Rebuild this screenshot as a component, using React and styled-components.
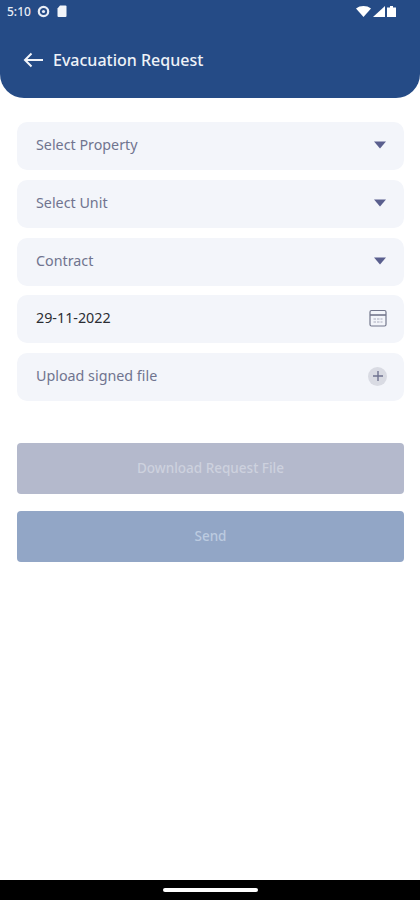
import styled, { createGlobalStyle } from "styled-components";

const GlobalStyle = createGlobalStyle`
  html, body {
    margin: 0;
    padding: 0;
    background: #fff;
  }
  * {
    box-sizing: border-box;
  }
`;

const ChevronDown = () => (
  <ChevronSvg width="12" height="8" viewBox="0 0 12 8">
    <path d="M0 0.5h12L6 7.5z" fill="#5a5f8e" />
  </ChevronSvg>
);

const CalendarIcon = () => (
  <svg width="18" height="18" viewBox="0 0 18 18" fill="none" stroke="#73778c" strokeWidth="1.2">
    <rect x="1" y="1.5" width="16" height="15.5" rx="1.5" />
    <path d="M1 6h16" strokeWidth="1.6" />
    <path d="M4.5 10h2.5M8 10h2.5M11.5 10h2M4.5 13h2.5M8 13h2.5M11.5 13h2" stroke="#a9acbc" />
  </svg>
);

const PlusIcon = () => (
  <PlusCircle>
    <svg width="10" height="10" viewBox="0 0 10 10" fill="none" stroke="#6f7390" strokeWidth="1.4">
      <path d="M5 0v10M0 5h10" />
    </svg>
  </PlusCircle>
);

const fields = [
  { label: "Select Property", icon: <ChevronDown /> },
  { label: "Select Unit", icon: <ChevronDown /> },
  { label: "Contract", icon: <ChevronDown /> },
  { label: "29-11-2022", icon: <CalendarIcon />, filled: true },
  { label: "Upload signed file", icon: <PlusIcon /> },
];

export default function App() {
  return (
    <Screen>
      <GlobalStyle />
      <Header>
        <StatusBar>
          <LeftStatus>
            <Time>5:10</Time>
            <svg width="13" height="13" viewBox="0 0 13 13">
              <circle cx="6.5" cy="6.5" r="4.7" fill="none" stroke="#e8edf5" strokeWidth="2.2" />
              <circle cx="6.5" cy="6.5" r="1.6" fill="#e8edf5" />
            </svg>
            <CardIcon width="10" height="12" viewBox="0 0 10 12">
              <path d="M3 0.5h5.5a1 1 0 0 1 1 1v9.5a1 1 0 0 1-1 1h-7a1 1 0 0 1-1-1V3.5z" fill="#f2f5fa" />
            </CardIcon>
          </LeftStatus>
          <RightStatus>
            <svg width="15" height="11" viewBox="0 0 15 11">
              <path d="M0 2.5C4.2-0.8 10.8-0.8 15 2.5L7.5 11z" fill="#fff" />
            </svg>
            <svg width="12" height="11" viewBox="0 0 12 11">
              <path d="M12 0v11H0z" fill="#fff" />
            </svg>
            <svg width="9" height="11" viewBox="0 0 9 11">
              <path d="M3 0h3v1.5h3V11H0V1.5h3z" fill="#fff" />
            </svg>
          </RightStatus>
        </StatusBar>
        <TitleRow>
          <svg width="20" height="16" viewBox="0 0 20 16" fill="none" stroke="#f2f5fa" strokeWidth="2">
            <path d="M20 8H2M8.5 1.5L2 8l6.5 6.5" />
          </svg>
          <Title>Evacuation Request</Title>
        </TitleRow>
      </Header>

      <Form>
        {fields.map((field) => (
          <Field key={field.label}>
            <FieldLabel $filled={field.filled}>{field.label}</FieldLabel>
            {field.icon}
          </Field>
        ))}
      </Form>

      <Actions>
        <ActionButton $bg="#b4b9cc" $color="#cdd1de">Download Request File</ActionButton>
        <ActionButton $bg="#92a6c6" $color="#bccbe0">Send</ActionButton>
      </Actions>

      <NavBar>
        <NavHandle />
      </NavBar>
    </Screen>
  );
}

const Screen = styled.div`
  position: relative;
  display: flex;
  flex-direction: column;
  width: 420px;
  height: 900px;
  overflow: hidden;
  background: #fff;
  font-family: "Noto Sans", "Open Sans", sans-serif;
`;

const Header = styled.header`
  display: flex;
  flex-direction: column;
  height: 98px;
  padding: 3px 0 0;
  background: #254b86;
  border-radius: 0 0 24px 24px;
`;

const StatusBar = styled.div`
  display: flex;
  justify-content: space-between;
  align-items: center;
  height: 16px;
  padding: 0 24px 0 7px;
`;

const LeftStatus = styled.div`
  display: flex;
  align-items: center;
  gap: 6px;
`;

const CardIcon = styled.svg`
  margin-left: 1px;
`;

const RightStatus = styled.div`
  display: flex;
  align-items: center;
  gap: 2px;
`;

const Time = styled.span`
  color: #e8edf5;
  font-size: 12px;
  font-weight: 500;
`;

const TitleRow = styled.div`
  display: flex;
  align-items: center;
  gap: 10px;
  padding: 22px 0 0 23px;
`;

const Title = styled.h1`
  margin: 0;
  color: #eef2f8;
  font-size: 16px;
  font-weight: 500;
  line-height: 38px;
`;

const Form = styled.div`
  display: flex;
  flex-direction: column;
  gap: 9.8px;
  padding: 24px 16px 0 17px;
`;

const Field = styled.div`
  display: flex;
  justify-content: space-between;
  align-items: center;
  height: 48px;
  padding: 0 17px 2px 19px;
  background: #f3f5fa;
  border-radius: 10px;
`;

const FieldLabel = styled.span`
  padding-bottom: 1px;
  color: ${(props) => (props.$filled ? "#2b2d33" : "#70748f")};
  font-size: 14.3px;
`;

const ChevronSvg = styled.svg`
  margin-right: 1px;
`;

const PlusCircle = styled.span`
  display: flex;
  justify-content: center;
  align-items: center;
  width: 19px;
  height: 19px;
  background: #d9dbe3;
  border-radius: 50%;
`;

const Actions = styled.div`
  display: flex;
  flex-direction: column;
  gap: 17px;
  padding: 42px 16px 0 17px;
`;

const ActionButton = styled.div`
  display: flex;
  justify-content: center;
  align-items: center;
  height: 51px;
  padding-bottom: 2px;
  background: ${(props) => props.$bg};
  color: ${(props) => props.$color};
  border-radius: 4px;
  font-size: 13.5px;
  font-weight: 500;
`;

const NavBar = styled.div`
  display: flex;
  justify-content: center;
  align-items: center;
  height: 20px;
  margin-top: auto;
  background: #000;
`;

const NavHandle = styled.div`
  width: 95px;
  height: 4px;
  background: #fff;
  border-radius: 2px;
`;
